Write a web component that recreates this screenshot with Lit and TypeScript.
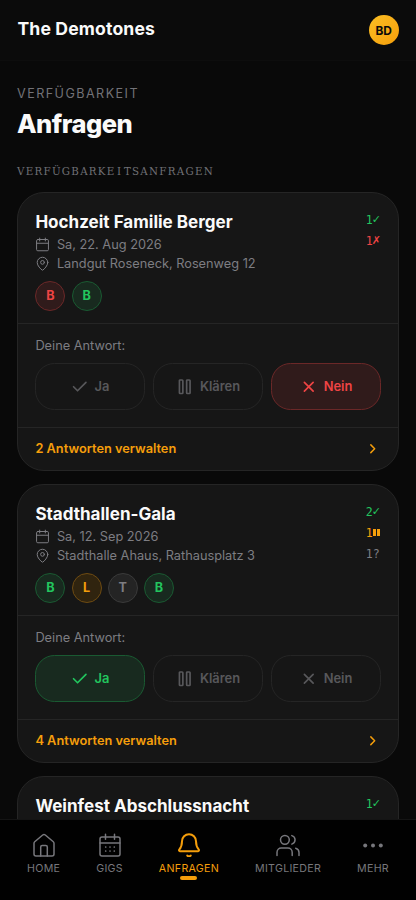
import { LitElement, html, css, svg } from "lit";
import { customElement } from "lit/decorators.js";
import { classMap } from "lit/directives/class-map.js";

type Answer = "yes" | "hold" | "no" | "open";

interface Gig {
  title: string;
  date?: string;
  place?: string;
  counts: { kind: Answer; n: number }[];
  people: { initial: string; answer: Answer }[];
  mine: Answer;
  replies: number;
}

const gigs: Gig[] = [
  {
    title: "Hochzeit Familie Berger",
    date: "Sa, 22. Aug 2026",
    place: "Landgut Roseneck, Rosenweg 12",
    counts: [{ kind: "yes", n: 1 }, { kind: "no", n: 1 }],
    people: [{ initial: "B", answer: "no" }, { initial: "B", answer: "yes" }],
    mine: "no",
    replies: 2,
  },
  {
    title: "Stadthallen-Gala",
    date: "Sa, 12. Sep 2026",
    place: "Stadthalle Ahaus, Rathausplatz 3",
    counts: [{ kind: "yes", n: 2 }, { kind: "hold", n: 1 }, { kind: "open", n: 1 }],
    people: [
      { initial: "B", answer: "yes" },
      { initial: "L", answer: "hold" },
      { initial: "T", answer: "open" },
      { initial: "B", answer: "yes" },
    ],
    mine: "yes",
    replies: 4,
  },
  {
    title: "Weinfest Abschlussnacht",
    counts: [{ kind: "yes", n: 1 }],
    people: [],
    mine: "open",
    replies: 0,
  },
];

const icons = {
  calendar: svg`<rect x="2.500" y="4" width="19" height="18" rx="2"/><path d="M2.500 10h19M7.500 1.800v4.500M16.500 1.800v4.500"/>`,
  pin: svg`<path d="M20.500 10.500c0 5-5.700 10.400-7.800 11.900a1.200 1.200 0 0 1-1.400 0C9.200 20.900 3.500 15.500 3.500 10.500a8.500 8.500 0 0 1 17 0Z"/><circle cx="12" cy="10.200" r="3"/>`,
  check: svg`<path d="M20.500 6 9 17.500l-5.500-5.500"/>`,
  pause: svg`<rect x="4.700" y="2.700" width="4.700" height="18.600" rx="1"/><rect x="14.600" y="2.700" width="4.700" height="18.600" rx="1"/>`,
  cross: svg`<path d="M18 6 6 18M6 6l12 12"/>`,
  chevron: svg`<path d="m9 18 6-6-6-6"/>`,
  home: svg`<path d="M2 10.300a2 2 0 0 1 .7-1.500L10.700 2a2 2 0 0 1 2.600 0l8 6.800a2 2 0 0 1 .7 1.500V21a2 2 0 0 1-2 2H4a2 2 0 0 1-2-2Z"/><path d="M8.700 23v-9a1.500 1.500 0 0 1 1.500-1.500h3.600a1.500 1.500 0 0 1 1.500 1.500v9"/>`,
  gigs: svg`<rect x="2" y="4" width="20" height="19" rx="2"/><path d="M2 10h20M7.500 1.300v5M16.500 1.300v5"/><path class="dots" d="M7.700 14h.01M12 14h.01M16.300 14h.01M7.700 18h.01M12 18h.01M16.300 18h.01"/>`,
  bell: svg`<path d="M10.300 22.600a2.300 2.300 0 0 0 3.400 0"/><path d="M2.900 18.200a.9.9 0 0 1-.7-1.500C4 14.600 5 12.700 5 8.200a7 7 0 0 1 14 0c0 4.500 1 6.400 2.800 8.500a.9.9 0 0 1-.7 1.500Z"/>`,
  members: svg`<path d="M16.200 22.500v-3.100a4.300 4.300 0 0 0-4.300-4.300H5.300A4.300 4.300 0 0 0 1 19.400v3.100"/><circle cx="8.900" cy="6.800" r="4.400"/><path d="M15.800 2.600a4.400 4.400 0 0 1 0 8.500M23 22.500v-3.100a4.400 4.400 0 0 0-3.300-4.200"/>`,
  more: svg`<g class="solid"><circle cx="4.200" cy="12.500" r="2"/><circle cx="12" cy="12.500" r="2"/><circle cx="19.800" cy="12.500" r="2"/></g>`,
};

const icon = (name: keyof typeof icons, cls: string) =>
  html`<svg class="icon ${cls}" viewBox="0 0 24 24">${icons[name]}</svg>`;

const marks = { yes: "✓", no: "✗", hold: "", open: "?" };

@customElement("gig-card")
export class GigCard extends LitElement {
  static properties = { gig: { attribute: false } };
  declare gig: Gig;

  static styles = css`
    :host { display: block; flex: none; }
    .card { box-sizing: border-box; height: 279px; background: #161616; border: 1px solid #252525; border-radius: 27px; }
    .top { box-sizing: border-box; height: 131px; padding: 16px 17.400px 0; display: flex; justify-content: space-between; }
    .ruled { border-bottom: 1px solid #252525; }
    .title { margin: 0 0 1px; padding-top: .6px; font-size: 17.050px; line-height: 24px; font-weight: 700; color: #fafafa; }
    .meta { display: flex; align-items: center; gap: 6.500px; height: 19.300px; font-size: 12.770px; color: #7d7d82; }
    .icon { fill: none; stroke: currentColor; stroke-width: 1.600; stroke-linecap: round; stroke-linejoin: round; flex: none; display: block; }
    .i15 { width: 15px; height: 15px; }
    .people { display: flex; gap: 6.200px; margin-top: 7.500px; }
    .person { box-sizing: border-box; width: 30px; height: 30px; border-radius: 50%; border: 1px solid; display: grid; place-items: center; font-size: 12.600px; font-weight: 700; }
    .yes { color: #22c55e; }
    .no { color: #ef4444; }
    .hold { color: #f59e0b; }
    .open { color: #7d7d82; }
    .person.yes, .choice.yes { background: #182a1f; border-color: #1a5a32; }
    .person.no, .choice.no { background: #301b1b; border-color: #6b2828; }
    .person.hold { background: #30240f; border-color: #6e4b12; }
    .person.open { background: #242424; border-color: #3a3a3a; }
    .counts { font-family: "DejaVu Sans Mono", monospace; font-size: 11.600px; padding-right: .8px; }
    .count { display: flex; justify-content: flex-end; align-items: center; height: 21.300px; }
    .glyph { width: 7px; display: flex; justify-content: center; }
    .yes .glyph, .no .glyph { font-family: "DejaVu Sans", sans-serif; font-size: 11px; }
    .bars { width: 7px; height: 7px; box-sizing: border-box; border: solid currentColor; border-width: 0 3px; }
    .answer { box-sizing: border-box; height: 104px; padding: 12px 17.400px 0; }
    .label { font-size: 12.770px; line-height: 19px; color: #7d7d82; }
    .choices { display: grid; grid-template-columns: repeat(3, 1fr); gap: 8.700px; margin-top: 8px; }
    .choice { box-sizing: border-box; height: 47px; border: 1px solid #252525; border-radius: 19.500px; display: flex; align-items: center; justify-content: center; gap: 6.500px; font-size: 12.900px; font-weight: 600; color: #58585b; }
    .choice.yes { color: #22c55e; }
    .choice.no { color: #ef4444; }
    .i17 { width: 17.500px; height: 17.500px; stroke-width: 2.300; }
    .foot { display: flex; align-items: center; justify-content: space-between; height: 41px; padding: 0 17.400px; color: #f59e0b; font-size: 12.780px; font-weight: 600; }
    .i14 { width: 15.500px; height: 15.500px; stroke-width: 2.200; }
  `;

  private details() {
    const g = this.gig;
    return html`
      <div class="meta">${icon("calendar", "i15")}<span>${g.date}</span></div>
      <div class="meta">${icon("pin", "i15")}<span>${g.place}</span></div>
      <div class="people">${g.people.map((p) => html`<span class="person ${p.answer}">${p.initial}</span>`)}</div>`;
  }

  private actions() {
    const g = this.gig;
    const choice = (kind: Answer, name: keyof typeof icons, text: string) => html`
      <div class=${classMap({ choice: true, [kind]: g.mine === kind })}>${icon(name, "i17")}<span>${text}</span></div>`;
    return html`
      <div class="answer ruled">
        <div class="label">Deine Antwort:</div>
        <div class="choices">
          ${choice("yes", "check", "Ja")}${choice("hold", "pause", "Klären")}${choice("no", "cross", "Nein")}
        </div>
      </div>
      <div class="foot"><span>${g.replies} Antworten verwalten</span>${icon("chevron", "i14")}</div>`;
  }

  render() {
    const g = this.gig;
    const full = Boolean(g.date);
    return html`<article class="card">
      <div class=${classMap({ top: true, ruled: full })}>
        <div>
          <h3 class="title">${g.title}</h3>
          ${full ? this.details() : ""}
        </div>
        <div class="counts">
          ${g.counts.map((c) => html`<div class="count ${c.kind}"><span>${c.n}</span>${c.kind === "hold" ? html`<i class="bars"></i>` : html`<span class="glyph">${marks[c.kind]}</span>`}</div>`)}
        </div>
      </div>
      ${full ? this.actions() : ""}
    </article>`;
  }
}

@customElement("app-root")
export class AppRoot extends LitElement {
  static styles = css`
    :host { display: flex; flex-direction: column; width: 416px; height: 900px; overflow: hidden; background: #090909; color: #fafafa; font-family: Inter, sans-serif; }
    .bar { box-sizing: border-box; flex: none; height: 61px; padding: 0 17.400px; display: flex; align-items: center; justify-content: space-between; background: #0b0b0b; border-bottom: 1px solid #0d0d0d; }
    .band { font-size: 17.600px; font-weight: 650; line-height: 24px; margin-top: -2px; letter-spacing: .15px; }
    .me { width: 30px; height: 30px; border-radius: 50%; background: linear-gradient(135deg, #fbbf24, #f59e0b); color: #0a0a0a; display: grid; place-items: center; font-size: 11.900px; font-weight: 700; }
    main { flex: 1; min-height: 0; overflow: hidden; padding: 23px 17px 0; display: flex; flex-direction: column; }
    .eyebrow { flex: none; font-size: 12.600px; line-height: 20px; letter-spacing: 1.450px; color: #727277; }
    h1 { flex: none; margin: 1px 0 0; font-size: 25.500px; line-height: 37px; font-weight: 800; letter-spacing: -.5px; }
    h2 { flex: none; margin: 20px 0 0; font-family: "DejaVu Serif", serif; font-size: 10.300px; line-height: 18px; font-weight: 400; letter-spacing: 1.260px; color: #707075; }
    .narrow { margin: 0 1.500px; }
    .list { display: flex; flex-direction: column; gap: 13px; margin-top: 12px; }
    nav { box-sizing: border-box; flex: none; height: 81px; background: #010101; border-top: 1px solid #141414; display: flex; justify-content: space-between; padding: 13px 27px 0; }
    .tab { display: flex; flex-direction: column; align-items: center; color: #77777c; font-size: 10.650px; line-height: 14px; letter-spacing: .3px; }
    .tab.active { color: #f59e0b; }
    .icon { display: block; fill: none; stroke: currentColor; stroke-width: 1.500; stroke-linecap: round; stroke-linejoin: round; width: 24px; height: 24px; margin-bottom: 4.600px; }
    .active .icon { stroke-width: 2; }
    .solid { fill: currentColor; stroke: none; }
    .dots { stroke-width: 1.700; }
    .mark { width: 17px; height: 4px; border-radius: 2px; background: #f59e0b; margin-top: .8px; }
  `;

  render() {
    const tabs: [keyof typeof icons, string][] = [
      ["home", "HOME"], ["gigs", "GIGS"], ["bell", "ANFRAGEN"], ["members", "MITGLIEDER"], ["more", "MEHR"],
    ];
    return html`
      <header class="bar"><div class="band">The Demotones</div><div class="me">BD</div></header>
      <main>
        <div class="eyebrow">VERFÜGBARKEIT</div>
        <h1>Anfragen</h1>
        <h2>VERFÜGBARKE<span class="narrow">I</span>TSANFRAGEN</h2>
        <div class="list">${gigs.map((g) => html`<gig-card .gig=${g}></gig-card>`)}</div>
      </main>
      <nav>
        ${tabs.map(([name, text]) => html`<div class=${classMap({ tab: true, active: name === "bell" })}>
          ${icon(name, "")}<span>${text}</span>${name === "bell" ? html`<i class="mark"></i>` : ""}
        </div>`)}
      </nav>`;
  }
}
